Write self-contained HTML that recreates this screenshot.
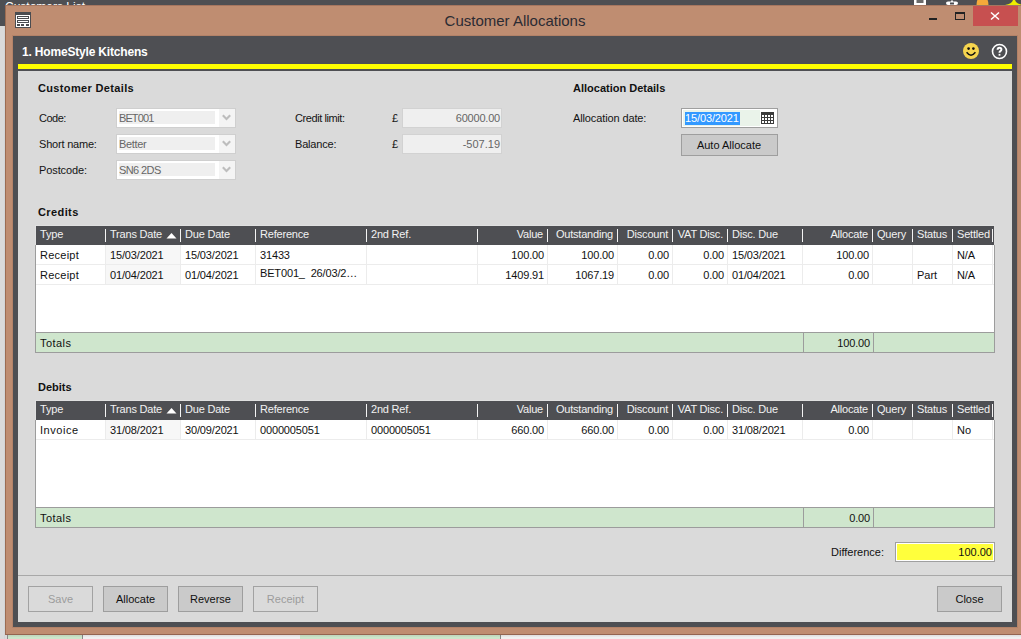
<!DOCTYPE html>
<html><head><meta charset="utf-8"><style>
html,body{margin:0;padding:0;}
body{width:1021px;height:639px;overflow:hidden;position:relative;background:#dadada;font-family:"Liberation Sans", sans-serif;}
div{position:absolute;box-sizing:border-box;}
.t{white-space:nowrap;font-size:11px;line-height:13px;height:13px;}
</style></head><body>
<div style="left:0px;top:0px;width:1021px;height:26px;background:#4e4f53"></div>
<div class="t" style="left:5px;top:1px;font-size:12px;color:#fff;">Customers List</div>
<svg style="position:absolute;left:900px;top:0px" width="121" height="6" viewBox="0 0 121 6"><rect x="14" y="-2" width="12" height="7" fill="#fff"/><rect x="16.5" y="-2" width="7" height="5" fill="#6a6a6a"/><path d="M46 3 Q46 1.5 48 1.5 L51 1.5 L52 -0.5 L53 1.5 L56 1.5 Q58 1.5 58 3 Q58 5 56 5 L48 5 Q46 5 46 3 Z" fill="#fff"/><rect x="50" y="2.5" width="4" height="2" fill="#4b4c50"/><path d="M76.5 5 Q76.5 -3 82.5 -3 Q88.5 -3 88.5 5 Z" fill="#f5a93a"/><path d="M105 5 Q112 4 113 0 L114 -2 L115 0 Q116 4 123 5 Z" fill="#eeee00"/></svg>
<div style="left:0px;top:634px;width:1021px;height:5px;background:#f0f0f0"></div>
<div style="left:0px;top:634px;width:7px;height:5px;background:#dadada"></div>
<div style="left:7px;top:634px;width:1px;height:5px;background:#888"></div>
<div style="left:8px;top:634px;width:74px;height:5px;background:#cde6cb"></div>
<div style="left:82px;top:634px;width:1px;height:5px;background:#888"></div>
<div style="left:300px;top:634px;width:200px;height:5px;background:#cde6cb"></div>
<div style="left:500px;top:634px;width:1px;height:5px;background:#888"></div>
<div style="left:8px;top:635px;width:1013px;height:1px;background:rgba(0,0,0,0.06)"></div>
<div style="left:8px;top:636px;width:1013px;height:1px;background:rgba(0,0,0,0.03)"></div>
<div style="left:4px;top:26px;width:1px;height:613px;background:#d2d4d6"></div>
<div style="left:5px;top:5px;width:1030px;height:630px;background:#bf8d71;border-left:1px solid #9c6c52;border-top:1px solid #a57660;border-bottom:1px solid #946450"></div>
<svg style="position:absolute;left:15px;top:12px" width="16" height="16" viewBox="0 0 16 16">
<rect x="0" y="0" width="16" height="16" fill="#4a4c50"/>
<rect x="1" y="3" width="14" height="12" fill="#fff"/>
<rect x="2.5" y="4.5" width="11" height="2" fill="none" stroke="#4a4c50" stroke-width="1"/>
<rect x="2.5" y="8.5" width="11" height="2" fill="none" stroke="#4a4c50" stroke-width="1"/>
<rect x="2" y="12" width="3" height="2" fill="#4a4c50"/>
<rect x="6" y="12" width="3" height="2" fill="#4a4c50"/>
<rect x="11" y="12" width="3" height="2" fill="#4a4c50"/>
</svg>
<div class="t" style="left:215px;width:600px;top:14px;text-align:center;color:#2b2b33;font-size:15px;">Customer Allocations</div>
<div style="left:929px;top:18px;width:8px;height:2px;background:#222"></div>
<div style="left:955px;top:12px;width:10px;height:8px;border:1px solid #222;border-top-width:2px;box-sizing:border-box"></div>
<div style="left:973px;top:6px;width:45px;height:20px;background:#c75050"></div>
<svg style="position:absolute;left:988px;top:9px" width="14" height="14" viewBox="0 0 14 14">
<path d="M3 3.5 L11 10.5 M11 3.5 L3 10.5" stroke="#fff" stroke-width="1.5"/></svg>
<div style="left:12px;top:35px;width:1006px;height:593px;background:#b38268"></div>
<div style="left:13px;top:36px;width:1004px;height:591px;background:#4e4f53"></div>
<div class="t" style="left:22px;top:46px;color:#fff;font-size:12px;font-weight:bold;letter-spacing:-0.18px;">1. HomeStyle Kitchens</div>
<svg style="position:absolute;left:962px;top:42px" width="18" height="18" viewBox="0 0 18 18">
<circle cx="9" cy="9" r="8" fill="#f6d54e"/>
<circle cx="6.6" cy="6.6" r="1.3" fill="#111"/>
<circle cx="11.4" cy="6.6" r="1.3" fill="#111"/>
<path d="M4.6 10.3 Q9 16 13.4 10.3" stroke="#111" stroke-width="1.5" fill="none"/></svg>
<svg style="position:absolute;left:991px;top:43px" width="17" height="17" viewBox="0 0 17 17">
<circle cx="8.5" cy="8.5" r="7" fill="none" stroke="#fff" stroke-width="1.6"/>
<path d="M6.6 6.7 Q6.6 4.7 8.5 4.7 Q10.4 4.7 10.4 6.5 Q10.4 7.6 9.3 8.2 Q8.5 8.7 8.5 9.8" stroke="#fff" stroke-width="2" fill="none"/><rect x="7.6" y="10.9" width="1.8" height="1.8" fill="#fff"/></svg>
<div style="left:18px;top:64px;width:994px;height:5px;background:#ffff00"></div>
<div style="left:18px;top:71px;width:994px;height:551px;background:#dadada"></div>
<div style="left:18px;top:575px;width:994px;height:1px;background:#a8a8a8"></div>
<div class="t" style="left:38px;top:82px;font-weight:bold;color:#111;letter-spacing:0.35px;">Customer Details</div>
<div class="t" style="left:39px;top:112px;color:#141414;letter-spacing:-0.5px;">Code:</div>
<div style="left:116px;top:108px;width:120px;height:20px;background:#fff;border:1px solid #cfcfcf"></div>
<div style="left:119px;top:111px;width:96px;height:13px;background:#efefef"></div>
<div style="left:219px;top:109px;width:16px;height:18px;background:#f4f4f4"></div>
<svg style="position:absolute;left:222px;top:114px" width="10" height="8" viewBox="0 0 10 8"><path d="M0.8 1.2 L4.5 4.9 L8.2 1.2" stroke="#bdbdbd" stroke-width="2.1" fill="none"/></svg>
<div class="t" style="left:119px;top:112px;color:#666;letter-spacing:-0.9px;">BET001</div>
<div class="t" style="left:39px;top:138px;color:#141414;letter-spacing:-0.2px;">Short name:</div>
<div style="left:116px;top:134px;width:120px;height:20px;background:#fff;border:1px solid #cfcfcf"></div>
<div style="left:119px;top:137px;width:96px;height:13px;background:#efefef"></div>
<div style="left:219px;top:135px;width:16px;height:18px;background:#f4f4f4"></div>
<svg style="position:absolute;left:222px;top:140px" width="10" height="8" viewBox="0 0 10 8"><path d="M0.8 1.2 L4.5 4.9 L8.2 1.2" stroke="#bdbdbd" stroke-width="2.1" fill="none"/></svg>
<div class="t" style="left:119px;top:138px;color:#666;letter-spacing:-0.35px;">Better</div>
<div class="t" style="left:39px;top:164px;color:#141414;letter-spacing:-0.1px;">Postcode:</div>
<div style="left:116px;top:160px;width:120px;height:20px;background:#fff;border:1px solid #cfcfcf"></div>
<div style="left:119px;top:163px;width:96px;height:13px;background:#efefef"></div>
<div style="left:219px;top:161px;width:16px;height:18px;background:#f4f4f4"></div>
<svg style="position:absolute;left:222px;top:166px" width="10" height="8" viewBox="0 0 10 8"><path d="M0.8 1.2 L4.5 4.9 L8.2 1.2" stroke="#bdbdbd" stroke-width="2.1" fill="none"/></svg>
<div class="t" style="left:119px;top:164px;color:#666;letter-spacing:-0.6px;">SN6 2DS</div>
<div class="t" style="left:295px;top:112px;color:#141414;letter-spacing:-0.42px;">Credit limit:</div>
<div class="t" style="left:392px;top:112px;color:#141414;">&pound;</div>
<div style="left:402px;top:108px;width:100px;height:20px;background:#efefef;border:1px solid #d2d2d2"></div>
<div class="t" style="right:521px;top:112px;text-align:right;color:#666;letter-spacing:-0.2px;">60000.00</div>
<div class="t" style="left:295px;top:138px;color:#141414;letter-spacing:-0.18px;">Balance:</div>
<div class="t" style="left:392px;top:138px;color:#141414;">&pound;</div>
<div style="left:402px;top:134px;width:100px;height:20px;background:#efefef;border:1px solid #d2d2d2"></div>
<div class="t" style="right:521px;top:138px;text-align:right;color:#666;letter-spacing:0px;">-507.19</div>
<div class="t" style="left:573px;top:82px;font-weight:bold;color:#111;">Allocation Details</div>
<div class="t" style="left:573px;top:112px;color:#141414;letter-spacing:-0.12px;">Allocation date:</div>
<div style="left:681px;top:108px;width:97px;height:20px;background:#fff;border:1px solid #9f9f9f"></div>
<div style="left:683px;top:110px;width:77px;height:16px;background:#eaf3ea"></div>
<div style="left:685px;top:112px;width:55px;height:13px;background:#3399ff"></div>
<div class="t" style="left:685px;top:112px;color:#fff;letter-spacing:-0.12px;">15/03/2021</div>
<svg style="position:absolute;left:761px;top:112px" width="13" height="12" viewBox="0 0 13 12"><rect x="0" y="0" width="13" height="12" fill="#3c3c3c"/><g fill="#fff"><rect x="1" y="3" width="2" height="2"/><rect x="4" y="3" width="2" height="2"/><rect x="7" y="3" width="2" height="2"/><rect x="10" y="3" width="2" height="2"/><rect x="1" y="6" width="2" height="2"/><rect x="4" y="6" width="2" height="2"/><rect x="7" y="6" width="2" height="2"/><rect x="10" y="6" width="2" height="2"/><rect x="1" y="9" width="2" height="2"/><rect x="4" y="9" width="2" height="2"/><rect x="7" y="9" width="2" height="2"/><rect x="10" y="9" width="2" height="2"/></g></svg>
<div style="left:681px;top:134px;width:97px;height:22px;background:#cacaca;border:1px solid #9e9e9e"></div>
<div class="t" style="left:429px;width:600px;top:139px;text-align:center;color:#111;">Auto Allocate</div>
<div class="t" style="left:38px;top:206px;font-weight:bold;color:#111;letter-spacing:0.4px;">Credits</div>
<div style="left:35px;top:225px;width:960px;height:1px;background:#e0e0e0"></div>
<div style="left:35px;top:225px;width:1px;height:20px;background:#e0e0e0"></div>
<div style="left:35px;top:245px;width:960px;height:107px;background:#fff;border:1px solid #9c9c9c;border-top:none"></div>
<div style="left:36px;top:226px;width:958px;height:19px;background:#4e4f53"></div>
<div style="left:105px;top:229px;width:1px;height:13px;background:#f4f4f4"></div>
<div class="t" style="left:40px;top:228px;color:#f2f2f2;letter-spacing:-0.2px;">Type</div>
<div style="left:180px;top:229px;width:1px;height:13px;background:#f4f4f4"></div>
<div class="t" style="left:110px;top:228px;color:#f2f2f2;letter-spacing:-0.2px;">Trans Date</div>
<div style="left:255px;top:229px;width:1px;height:13px;background:#f4f4f4"></div>
<div class="t" style="left:185px;top:228px;color:#f2f2f2;letter-spacing:-0.2px;">Due Date</div>
<div style="left:366px;top:229px;width:1px;height:13px;background:#f4f4f4"></div>
<div class="t" style="left:260px;top:228px;color:#f2f2f2;letter-spacing:-0.2px;">Reference</div>
<div style="left:477px;top:229px;width:1px;height:13px;background:#f4f4f4"></div>
<div class="t" style="left:371px;top:228px;color:#f2f2f2;letter-spacing:-0.2px;">2nd Ref.</div>
<div style="left:547px;top:229px;width:1px;height:13px;background:#f4f4f4"></div>
<div class="t" style="right:478px;top:228px;text-align:right;color:#f2f2f2;letter-spacing:-0.2px;">Value</div>
<div style="left:617px;top:229px;width:1px;height:13px;background:#f4f4f4"></div>
<div class="t" style="right:408px;top:228px;text-align:right;color:#f2f2f2;letter-spacing:-0.2px;">Outstanding</div>
<div style="left:672px;top:229px;width:1px;height:13px;background:#f4f4f4"></div>
<div class="t" style="right:353px;top:228px;text-align:right;color:#f2f2f2;letter-spacing:-0.2px;">Discount</div>
<div style="left:727px;top:229px;width:1px;height:13px;background:#f4f4f4"></div>
<div class="t" style="right:298px;top:228px;text-align:right;color:#f2f2f2;letter-spacing:-0.2px;">VAT Disc.</div>
<div style="left:802px;top:229px;width:1px;height:13px;background:#f4f4f4"></div>
<div class="t" style="left:732px;top:228px;color:#f2f2f2;letter-spacing:-0.2px;">Disc. Due</div>
<div style="left:872px;top:229px;width:1px;height:13px;background:#f4f4f4"></div>
<div class="t" style="right:153px;top:228px;text-align:right;color:#f2f2f2;letter-spacing:-0.2px;">Allocate</div>
<div style="left:912px;top:229px;width:1px;height:13px;background:#f4f4f4"></div>
<div class="t" style="left:877px;top:228px;color:#f2f2f2;letter-spacing:-0.2px;">Query</div>
<div style="left:952px;top:229px;width:1px;height:13px;background:#f4f4f4"></div>
<div class="t" style="left:917px;top:228px;color:#f2f2f2;letter-spacing:-0.2px;">Status</div>
<div style="left:992px;top:229px;width:1px;height:13px;background:#f4f4f4"></div>
<div class="t" style="left:957px;top:228px;color:#f2f2f2;letter-spacing:-0.2px;">Settled</div>
<svg style="position:absolute;left:166px;top:232px" width="11" height="7" viewBox="0 0 11 7"><path d="M0.5 6.5 L5.5 1 L10.5 6.5 Z" fill="#fff"/></svg>
<div style="left:106px;top:245px;width:75px;height:19px;background:#f7f7f7"></div>
<div style="left:36px;top:264px;width:958px;height:1px;background:#ececec"></div>
<div style="left:105px;top:245px;width:1px;height:19px;background:#ececec"></div>
<div class="t" style="left:40px;top:249px;color:#111;letter-spacing:0.25px;">Receipt</div>
<div style="left:180px;top:245px;width:1px;height:19px;background:#ececec"></div>
<div class="t" style="left:110px;top:249px;color:#111;letter-spacing:-0.15px;">15/03/2021</div>
<div style="left:255px;top:245px;width:1px;height:19px;background:#ececec"></div>
<div class="t" style="left:185px;top:249px;color:#111;letter-spacing:-0.15px;">15/03/2021</div>
<div style="left:366px;top:245px;width:1px;height:19px;background:#ececec"></div>
<div class="t" style="left:260px;top:249px;color:#111;letter-spacing:-0.15px;">31433</div>
<div style="left:477px;top:245px;width:1px;height:19px;background:#ececec"></div>
<div style="left:547px;top:245px;width:1px;height:19px;background:#ececec"></div>
<div class="t" style="right:477px;top:249px;text-align:right;color:#111;letter-spacing:-0.15px;">100.00</div>
<div style="left:617px;top:245px;width:1px;height:19px;background:#ececec"></div>
<div class="t" style="right:407px;top:249px;text-align:right;color:#111;letter-spacing:-0.15px;">100.00</div>
<div style="left:672px;top:245px;width:1px;height:19px;background:#ececec"></div>
<div class="t" style="right:352px;top:249px;text-align:right;color:#111;letter-spacing:-0.15px;">0.00</div>
<div style="left:727px;top:245px;width:1px;height:19px;background:#ececec"></div>
<div class="t" style="right:297px;top:249px;text-align:right;color:#111;letter-spacing:-0.15px;">0.00</div>
<div style="left:802px;top:245px;width:1px;height:19px;background:#ececec"></div>
<div class="t" style="left:732px;top:249px;color:#111;letter-spacing:-0.15px;">15/03/2021</div>
<div style="left:872px;top:245px;width:1px;height:19px;background:#ececec"></div>
<div class="t" style="right:152px;top:249px;text-align:right;color:#111;letter-spacing:-0.15px;">100.00</div>
<div style="left:912px;top:245px;width:1px;height:19px;background:#ececec"></div>
<div style="left:952px;top:245px;width:1px;height:19px;background:#ececec"></div>
<div style="left:992px;top:245px;width:1px;height:19px;background:#ececec"></div>
<div class="t" style="left:957px;top:249px;color:#111;letter-spacing:-0.15px;">N/A</div>
<div style="left:106px;top:265px;width:75px;height:19px;background:#f7f7f7"></div>
<div style="left:36px;top:284px;width:958px;height:1px;background:#ececec"></div>
<div style="left:105px;top:265px;width:1px;height:19px;background:#ececec"></div>
<div class="t" style="left:40px;top:269px;color:#111;letter-spacing:0.25px;">Receipt</div>
<div style="left:180px;top:265px;width:1px;height:19px;background:#ececec"></div>
<div class="t" style="left:110px;top:269px;color:#111;letter-spacing:-0.15px;">01/04/2021</div>
<div style="left:255px;top:265px;width:1px;height:19px;background:#ececec"></div>
<div class="t" style="left:185px;top:269px;color:#111;letter-spacing:-0.15px;">01/04/2021</div>
<div style="left:366px;top:265px;width:1px;height:19px;background:#ececec"></div>
<div class="t" style="left:260px;top:267px;color:#111;letter-spacing:-0.15px;">BET001_&nbsp; 26/03/2&hellip;</div>
<div style="left:477px;top:265px;width:1px;height:19px;background:#ececec"></div>
<div style="left:547px;top:265px;width:1px;height:19px;background:#ececec"></div>
<div class="t" style="right:477px;top:269px;text-align:right;color:#111;letter-spacing:-0.15px;">1409.91</div>
<div style="left:617px;top:265px;width:1px;height:19px;background:#ececec"></div>
<div class="t" style="right:407px;top:269px;text-align:right;color:#111;letter-spacing:-0.15px;">1067.19</div>
<div style="left:672px;top:265px;width:1px;height:19px;background:#ececec"></div>
<div class="t" style="right:352px;top:269px;text-align:right;color:#111;letter-spacing:-0.15px;">0.00</div>
<div style="left:727px;top:265px;width:1px;height:19px;background:#ececec"></div>
<div class="t" style="right:297px;top:269px;text-align:right;color:#111;letter-spacing:-0.15px;">0.00</div>
<div style="left:802px;top:265px;width:1px;height:19px;background:#ececec"></div>
<div class="t" style="left:732px;top:269px;color:#111;letter-spacing:-0.15px;">01/04/2021</div>
<div style="left:872px;top:265px;width:1px;height:19px;background:#ececec"></div>
<div class="t" style="right:152px;top:269px;text-align:right;color:#111;letter-spacing:-0.15px;">0.00</div>
<div style="left:912px;top:265px;width:1px;height:19px;background:#ececec"></div>
<div style="left:952px;top:265px;width:1px;height:19px;background:#ececec"></div>
<div class="t" style="left:917px;top:269px;color:#111;">Part</div>
<div style="left:992px;top:265px;width:1px;height:19px;background:#ececec"></div>
<div class="t" style="left:957px;top:269px;color:#111;letter-spacing:-0.15px;">N/A</div>
<div style="left:35px;top:332px;width:960px;height:21px;background:#cfe6cd;border:1px solid #9c9c9c"></div>
<div style="left:803px;top:332px;width:1px;height:21px;background:#9c9c9c"></div>
<div style="left:873px;top:332px;width:1px;height:21px;background:#9c9c9c"></div>
<div class="t" style="left:40px;top:337px;color:#111;letter-spacing:0.45px;">Totals</div>
<div class="t" style="right:151px;top:337px;text-align:right;color:#111;letter-spacing:-0.15px;">100.00</div>
<div class="t" style="left:38px;top:381px;font-weight:bold;color:#111;">Debits</div>
<div style="left:35px;top:400px;width:960px;height:1px;background:#e0e0e0"></div>
<div style="left:35px;top:400px;width:1px;height:20px;background:#e0e0e0"></div>
<div style="left:35px;top:420px;width:960px;height:107px;background:#fff;border:1px solid #9c9c9c;border-top:none"></div>
<div style="left:36px;top:401px;width:958px;height:19px;background:#4e4f53"></div>
<div style="left:105px;top:404px;width:1px;height:13px;background:#f4f4f4"></div>
<div class="t" style="left:40px;top:403px;color:#f2f2f2;letter-spacing:-0.2px;">Type</div>
<div style="left:180px;top:404px;width:1px;height:13px;background:#f4f4f4"></div>
<div class="t" style="left:110px;top:403px;color:#f2f2f2;letter-spacing:-0.2px;">Trans Date</div>
<div style="left:255px;top:404px;width:1px;height:13px;background:#f4f4f4"></div>
<div class="t" style="left:185px;top:403px;color:#f2f2f2;letter-spacing:-0.2px;">Due Date</div>
<div style="left:366px;top:404px;width:1px;height:13px;background:#f4f4f4"></div>
<div class="t" style="left:260px;top:403px;color:#f2f2f2;letter-spacing:-0.2px;">Reference</div>
<div style="left:477px;top:404px;width:1px;height:13px;background:#f4f4f4"></div>
<div class="t" style="left:371px;top:403px;color:#f2f2f2;letter-spacing:-0.2px;">2nd Ref.</div>
<div style="left:547px;top:404px;width:1px;height:13px;background:#f4f4f4"></div>
<div class="t" style="right:478px;top:403px;text-align:right;color:#f2f2f2;letter-spacing:-0.2px;">Value</div>
<div style="left:617px;top:404px;width:1px;height:13px;background:#f4f4f4"></div>
<div class="t" style="right:408px;top:403px;text-align:right;color:#f2f2f2;letter-spacing:-0.2px;">Outstanding</div>
<div style="left:672px;top:404px;width:1px;height:13px;background:#f4f4f4"></div>
<div class="t" style="right:353px;top:403px;text-align:right;color:#f2f2f2;letter-spacing:-0.2px;">Discount</div>
<div style="left:727px;top:404px;width:1px;height:13px;background:#f4f4f4"></div>
<div class="t" style="right:298px;top:403px;text-align:right;color:#f2f2f2;letter-spacing:-0.2px;">VAT Disc.</div>
<div style="left:802px;top:404px;width:1px;height:13px;background:#f4f4f4"></div>
<div class="t" style="left:732px;top:403px;color:#f2f2f2;letter-spacing:-0.2px;">Disc. Due</div>
<div style="left:872px;top:404px;width:1px;height:13px;background:#f4f4f4"></div>
<div class="t" style="right:153px;top:403px;text-align:right;color:#f2f2f2;letter-spacing:-0.2px;">Allocate</div>
<div style="left:912px;top:404px;width:1px;height:13px;background:#f4f4f4"></div>
<div class="t" style="left:877px;top:403px;color:#f2f2f2;letter-spacing:-0.2px;">Query</div>
<div style="left:952px;top:404px;width:1px;height:13px;background:#f4f4f4"></div>
<div class="t" style="left:917px;top:403px;color:#f2f2f2;letter-spacing:-0.2px;">Status</div>
<div style="left:992px;top:404px;width:1px;height:13px;background:#f4f4f4"></div>
<div class="t" style="left:957px;top:403px;color:#f2f2f2;letter-spacing:-0.2px;">Settled</div>
<svg style="position:absolute;left:166px;top:407px" width="11" height="7" viewBox="0 0 11 7"><path d="M0.5 6.5 L5.5 1 L10.5 6.5 Z" fill="#fff"/></svg>
<div style="left:106px;top:420px;width:75px;height:19px;background:#f7f7f7"></div>
<div style="left:36px;top:439px;width:958px;height:1px;background:#ececec"></div>
<div style="left:105px;top:420px;width:1px;height:19px;background:#ececec"></div>
<div class="t" style="left:40px;top:424px;color:#111;letter-spacing:0.55px;">Invoice</div>
<div style="left:180px;top:420px;width:1px;height:19px;background:#ececec"></div>
<div class="t" style="left:110px;top:424px;color:#111;letter-spacing:-0.15px;">31/08/2021</div>
<div style="left:255px;top:420px;width:1px;height:19px;background:#ececec"></div>
<div class="t" style="left:185px;top:424px;color:#111;letter-spacing:-0.15px;">30/09/2021</div>
<div style="left:366px;top:420px;width:1px;height:19px;background:#ececec"></div>
<div class="t" style="left:260px;top:424px;color:#111;letter-spacing:-0.15px;">0000005051</div>
<div style="left:477px;top:420px;width:1px;height:19px;background:#ececec"></div>
<div class="t" style="left:371px;top:424px;color:#111;letter-spacing:-0.15px;">0000005051</div>
<div style="left:547px;top:420px;width:1px;height:19px;background:#ececec"></div>
<div class="t" style="right:477px;top:424px;text-align:right;color:#111;letter-spacing:-0.15px;">660.00</div>
<div style="left:617px;top:420px;width:1px;height:19px;background:#ececec"></div>
<div class="t" style="right:407px;top:424px;text-align:right;color:#111;letter-spacing:-0.15px;">660.00</div>
<div style="left:672px;top:420px;width:1px;height:19px;background:#ececec"></div>
<div class="t" style="right:352px;top:424px;text-align:right;color:#111;letter-spacing:-0.15px;">0.00</div>
<div style="left:727px;top:420px;width:1px;height:19px;background:#ececec"></div>
<div class="t" style="right:297px;top:424px;text-align:right;color:#111;letter-spacing:-0.15px;">0.00</div>
<div style="left:802px;top:420px;width:1px;height:19px;background:#ececec"></div>
<div class="t" style="left:732px;top:424px;color:#111;letter-spacing:-0.15px;">31/08/2021</div>
<div style="left:872px;top:420px;width:1px;height:19px;background:#ececec"></div>
<div class="t" style="right:152px;top:424px;text-align:right;color:#111;letter-spacing:-0.15px;">0.00</div>
<div style="left:912px;top:420px;width:1px;height:19px;background:#ececec"></div>
<div style="left:952px;top:420px;width:1px;height:19px;background:#ececec"></div>
<div style="left:992px;top:420px;width:1px;height:19px;background:#ececec"></div>
<div class="t" style="left:957px;top:424px;color:#111;">No</div>
<div style="left:35px;top:507px;width:960px;height:21px;background:#cfe6cd;border:1px solid #9c9c9c"></div>
<div style="left:803px;top:507px;width:1px;height:21px;background:#9c9c9c"></div>
<div style="left:873px;top:507px;width:1px;height:21px;background:#9c9c9c"></div>
<div class="t" style="left:40px;top:512px;color:#111;letter-spacing:0.45px;">Totals</div>
<div class="t" style="right:151px;top:512px;text-align:right;color:#111;letter-spacing:-0.15px;">0.00</div>
<div class="t" style="left:831px;top:546px;color:#111;">Difference:</div>
<div style="left:895px;top:542px;width:100px;height:20px;background:#fff;border:1px solid #9f9f9f"></div>
<div style="left:897px;top:544px;width:96px;height:16px;background:#ffff3c"></div>
<div class="t" style="right:29px;top:546px;text-align:right;color:#111;">100.00</div>
<div style="left:28px;top:586px;width:65px;height:26px;border:1px solid #a2a2a2"></div>
<div class="t" style="left:-239.5px;width:600px;top:593px;text-align:center;color:#9c9c9c;">Save</div>
<div style="left:103px;top:586px;width:65px;height:26px;background:#cacaca;border:1px solid #9e9e9e"></div>
<div class="t" style="left:-164.5px;width:600px;top:593px;text-align:center;color:#111;">Allocate</div>
<div style="left:178px;top:586px;width:65px;height:26px;background:#cacaca;border:1px solid #9e9e9e"></div>
<div class="t" style="left:-89.5px;width:600px;top:593px;text-align:center;color:#111;">Reverse</div>
<div style="left:253px;top:586px;width:65px;height:26px;border:1px solid #a2a2a2"></div>
<div class="t" style="left:-14.5px;width:600px;top:593px;text-align:center;color:#9c9c9c;">Receipt</div>
<div style="left:937px;top:586px;width:65px;height:26px;background:#cacaca;border:1px solid #9e9e9e"></div>
<div class="t" style="left:669.5px;width:600px;top:593px;text-align:center;color:#111;">Close</div>
</body></html>
